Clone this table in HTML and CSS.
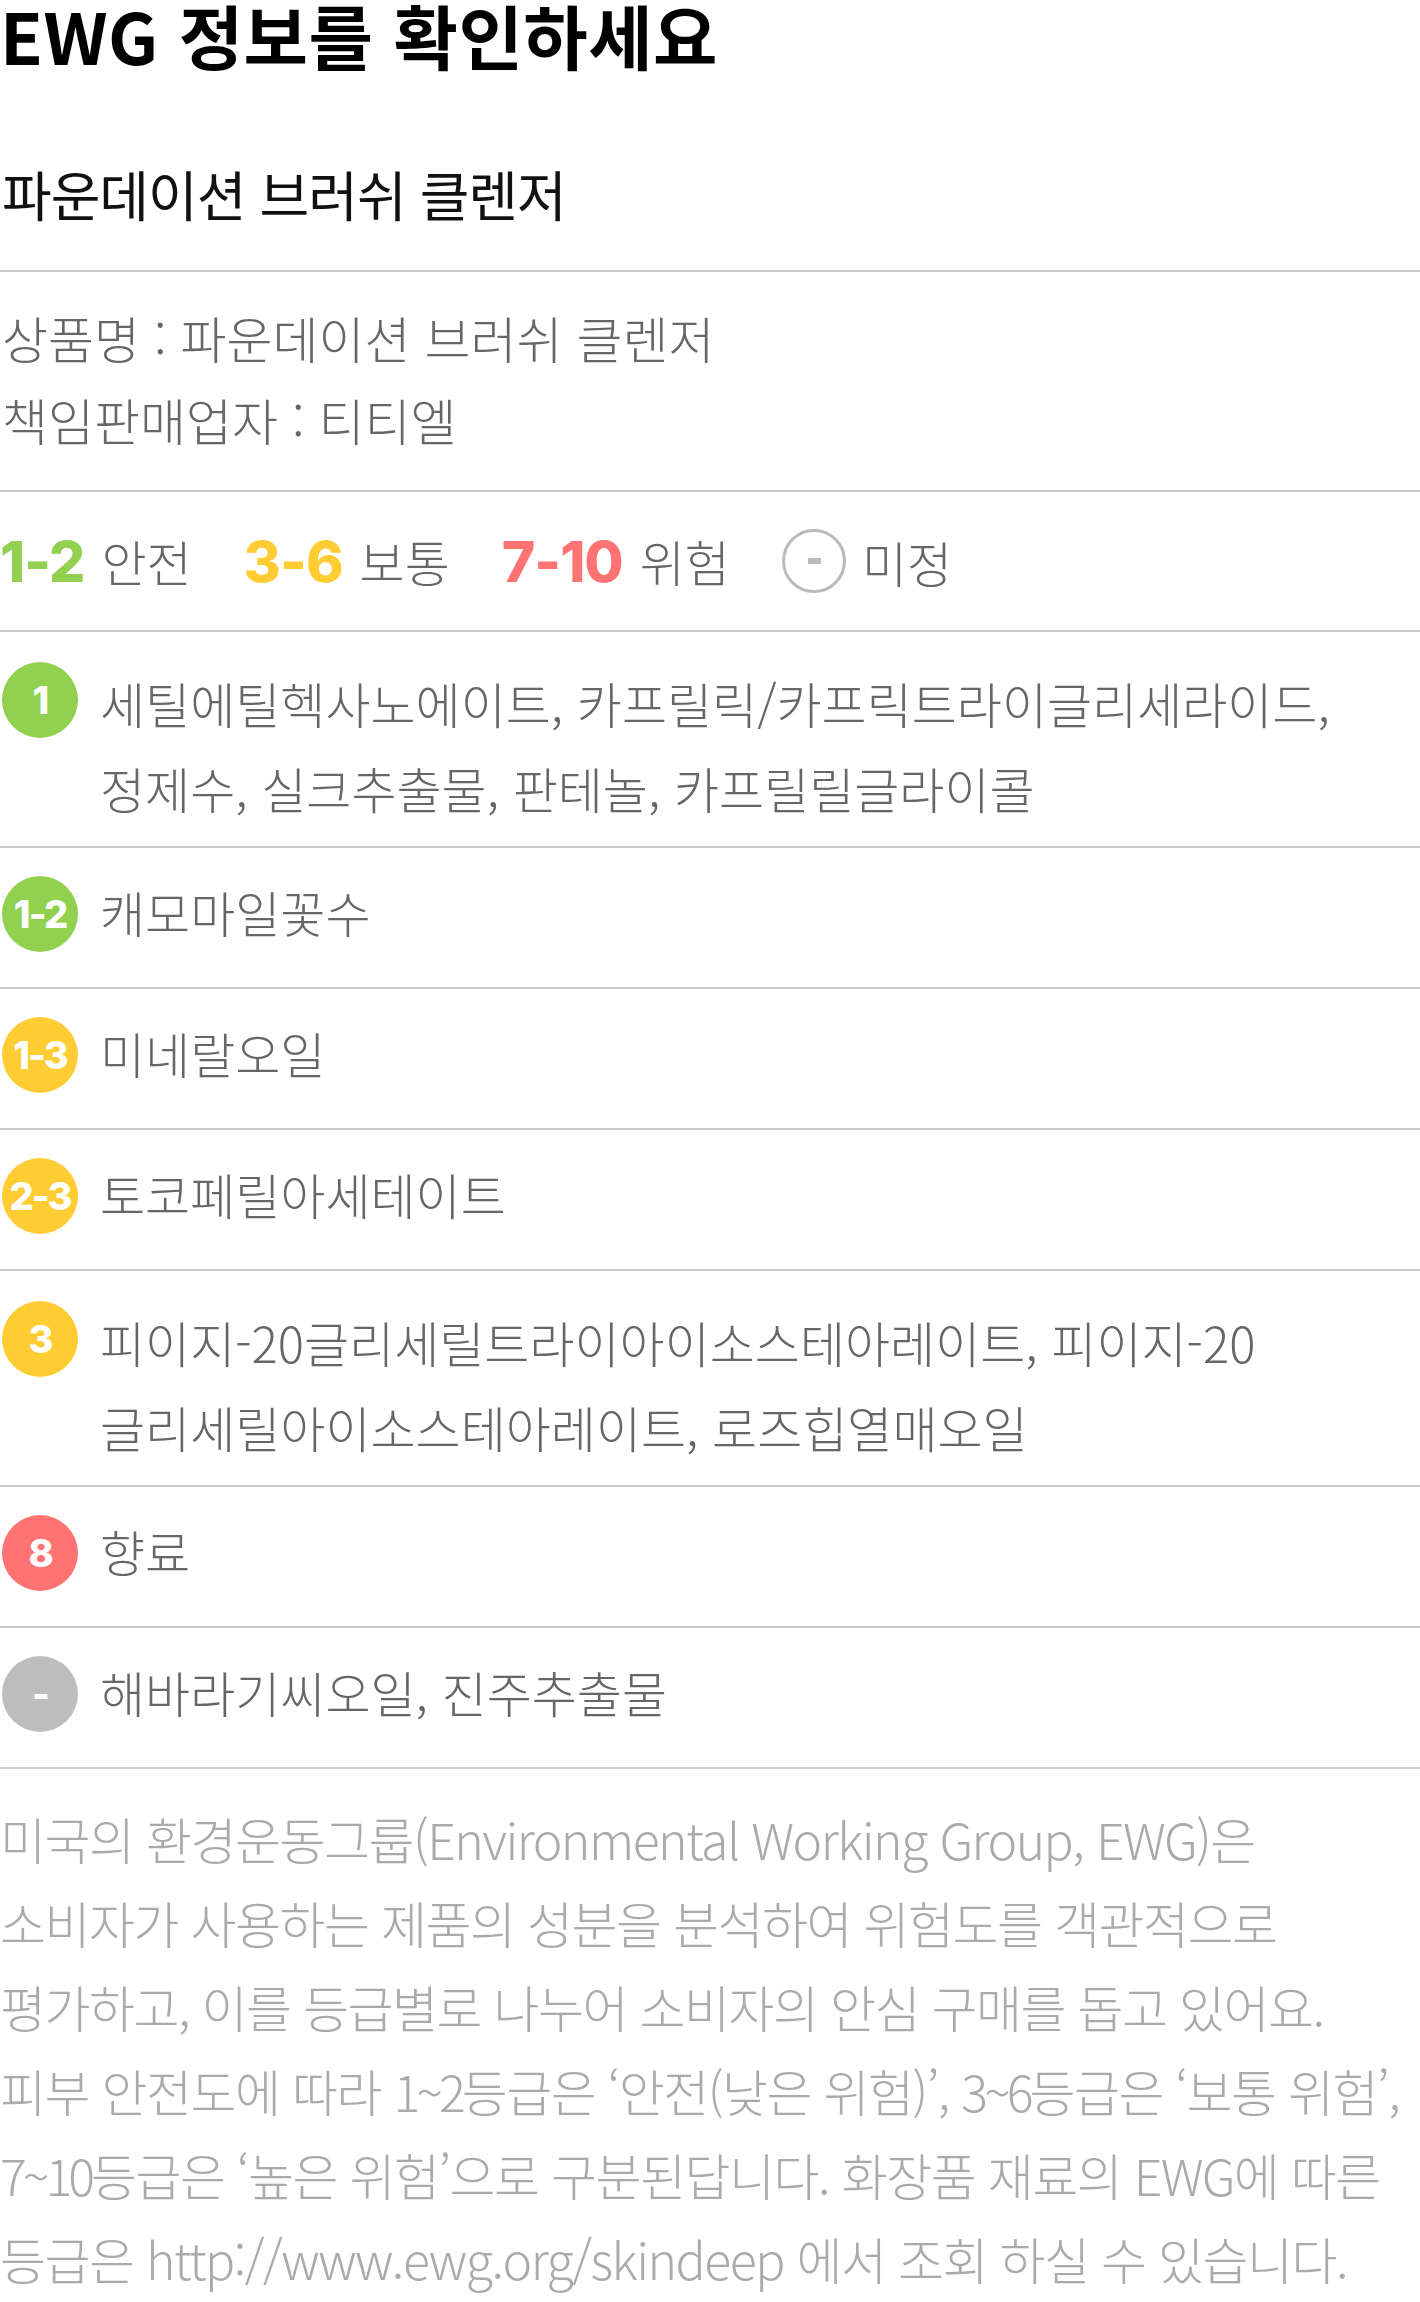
FILE: index.html
```html
<!DOCTYPE html>
<html lang="ko">
<head>
    <meta charset="UTF-8">
    <meta name="viewport" content="width=device-width, initial-scale=1.0">
    <title>EWG 정보</title>
    <link rel="stylesheet" href="styles.css">
</head>
<body>
    <h1 class="title">EWG 정보를 확인하세요</h1>

    <!-- Product name -->
    <div class="product">파운데이션 브러쉬 클렌저</div>

    <!-- Product info -->
    <div class="info">
        <p>상품명 : 파운데이션 브러쉬 클렌저</p>
        <p>책임판매업자 : 티티엘</p>
    </div>

    <!-- Grade legend -->
    <div class="legend">
        <span class="legend-item"><b class="num green">1-2</b>안전</span>
        <span class="legend-item"><b class="num yellow">3-6</b>보통</span>
        <span class="legend-item"><b class="num red">7-10</b>위험</span>
        <span class="legend-item unknown"><i class="none-icon"></i>미정</span>
    </div>

    <!-- Ingredients by grade -->
    <ul class="ingredients">
        <li class="multi">
            <span class="badge green">1</span>
            <p>세틸에틸헥사노에이트, 카프릴릭/카프릭트라이글리세라이드,<br>정제수, 실크추출물, 판테놀, 카프릴릴글라이콜</p>
        </li>
        <li>
            <span class="badge green">1-2</span>
            <p>캐모마일꽃수</p>
        </li>
        <li>
            <span class="badge yellow">1-3</span>
            <p>미네랄오일</p>
        </li>
        <li>
            <span class="badge yellow">2-3</span>
            <p>토코페릴아세테이트</p>
        </li>
        <li class="multi">
            <span class="badge yellow">3</span>
            <p>피이지-20글리세릴트라이아이소스테아레이트, 피이지-20<br>글리세릴아이소스테아레이트, 로즈힙열매오일</p>
        </li>
        <li>
            <span class="badge red">8</span>
            <p>향료</p>
        </li>
        <li>
            <span class="badge gray">-</span>
            <p>해바라기씨오일, 진주추출물</p>
        </li>
    </ul>

    <!-- About EWG -->
    <p class="desc">미국의 환경운동그룹(Environmental Working Group, EWG)은<br>소비자가 사용하는 제품의 성분을 분석하여 위험도를 객관적으로<br>평가하고, 이를 등급별로 나누어 소비자의 안심 구매를 돕고 있어요.<br>피부 안전도에 따라 <span class="range">1~2</span>등급은 ‘안전(낮은 위험)’, <span class="range">3~6</span>등급은 ‘보통 위험’,<br><span class="range">7~10</span>등급은 ‘높은 위험’으로 구분된답니다. 화장품 재료의 EWG에 따른<br>등급은 http://www.ewg.org/skindeep 에서 조회 하실 수 있습니다.</p>
</body>
</html>
```

FILE: styles.css
```css
body {
    margin: 0;
    font-family: "Noto Sans CJK KR", "Noto Sans", sans-serif;
    color: #666;
    background: #fff;
}
p {
    margin: 0;
}
.title {
    margin: 0;
    font-size: 70px;
    line-height: 70px;
    font-weight: 700;
    letter-spacing: 0.5px;
    color: #000;
}
.product {
    padding: 94px 0 46px 2px;
    font-size: 54px;
    line-height: 60px;
    letter-spacing: -1px;
    color: #111;
    border-bottom: 2px solid #ccc;
}
.info {
    padding: 24px 0 30px 2px;
    font-size: 50px;
    line-height: 82px;
    font-weight: 300;
    letter-spacing: 0;
    border-bottom: 2px solid #ccc;
}

/* legend */
.legend {
    display: flex;
    align-items: center;
    gap: 52px;
    height: 138px;
    border-bottom: 2px solid #ccc;
    font-size: 49px;
    font-weight: 300;
}
.legend-item {
    display: flex;
    align-items: baseline;
    line-height: 1;
}
.legend-item.unknown {
    align-items: center;
}
.num {
    font-family: Inter, "Liberation Sans", sans-serif;
    font-size: 57px;
    font-weight: 800;
    letter-spacing: -1px;
    margin-right: 17px;
}
.none-icon {
    position: relative;
    width: 58px;
    height: 58px;
    border: 3px solid #bbb;
    border-radius: 50%;
    margin-right: 16px;
}
.none-icon::after {
    content: "";
    position: absolute;
    left: 23px;
    top: 26px;
    width: 13px;
    height: 6px;
    background: #bbb;
}
.green { color: #92d050; }
.yellow { color: #ffcc33; }
.red { color: #ff7373; }

/* ingredient rows */
.ingredients {
    list-style: none;
    margin: 0;
    padding: 0;
}
.ingredients li {
    display: flex;
    align-items: flex-start;
    padding: 21px 0 33px;
    border-bottom: 2px solid #ccc;
}
.ingredients li.multi {
    padding: 28px 0 16px;
}
.ingredients p {
    font-size: 49px;
    line-height: 85px;
    font-weight: 300;
    letter-spacing: 0;
    white-space: nowrap;
}
.badge {
    flex: none;
    width: 76px;
    height: 76px;
    margin: 7px 22px 0 2px;
    border-radius: 50%;
    color: #fff;
    font-family: Inter, "Liberation Sans", sans-serif;
    font-size: 38px;
    font-weight: 800;
    letter-spacing: -2px;
    line-height: 76px;
    text-align: center;
}
.multi .badge {
    margin-top: 2px;
}
.badge.green { background: #92d050; }
.badge.yellow { background: #ffcc33; }
.badge.red { background: #ff7373; }
.badge.gray { background: #bdbdbd; }

/* description */
.desc {
    padding: 27px 0 0;
    font-size: 50px;
    line-height: 84px;
    font-weight: 300;
    letter-spacing: -1.5px;
    color: #aaa;
    white-space: nowrap;
}
.range {
    letter-spacing: -4px;
}
```
